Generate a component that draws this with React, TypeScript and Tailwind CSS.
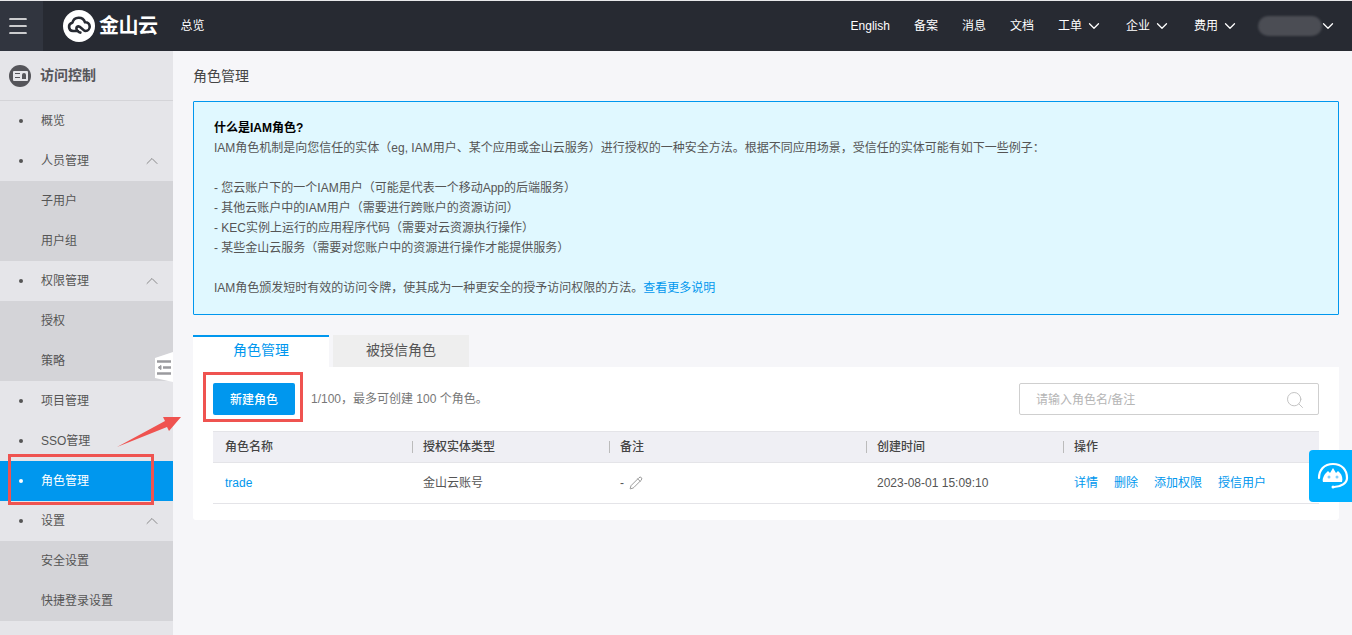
import { ChevronDown, ChevronUp, Menu, Pencil, Search } from 'lucide-react';

const navGroups = [
  { label: '概览' },
  { label: '人员管理', children: ['子用户', '用户组'] },
  { label: '权限管理', children: ['授权', '策略'] },
  { label: '项目管理' },
  { label: 'SSO管理' },
  { label: '角色管理', active: true },
  { label: '设置', children: ['安全设置', '快捷登录设置'] },
];

const topLinks = [
  { label: 'English' },
  { label: '备案' },
  { label: '消息' },
  { label: '文档' },
  { label: '工单', caret: true },
  { label: '企业', caret: true },
  { label: '费用', caret: true },
];

function Logo() {
  return (
    <div className="flex items-center ml-5">
      <div className="w-8 h-8 rounded-full bg-white flex items-center justify-center">
        <svg width="26" height="20" viewBox="0 0 26 20" fill="none" stroke="#272a32" strokeWidth="2.6" strokeLinejoin="round" strokeLinecap="round">
          <path d="M12 15H7a4.2 4.2 0 0 1-.6-8.3A6.6 6.6 0 0 1 19 6.2a4.4 4.4 0 0 1 .6 8.8c-2.6 0-4.6-4.6-7-4.6-1.4 0-2.200 1-2.200 2.200 0 1.600 2 4 4 4" />
        </svg>
      </div>
      <span className="ml-1 text-white text-[20px] leading-none font-bold tracking-[-0.5px]">金山云</span>
    </div>
  );
}

function TopBar() {
  return (
    <header className="h-[51px] shrink-0 border-t border-[#e8e8ea] bg-[#272a32] flex items-center text-white text-[12px]">
      <div className="w-[43px] h-full bg-[#31353f] flex items-center pl-[6px]">
        <Menu size={24} strokeWidth={1.7} />
      </div>
      <Logo />
      <span className="ml-[23px]">总览</span>
      <div className="ml-auto flex items-center">
        {topLinks.map((l) => (
          <div key={l.label} className={`flex items-center ${l.caret ? 'mr-[23px]' : 'mr-6'}`}>
            <span>{l.label}</span>
            {l.caret && <ChevronDown size={18} strokeWidth={1.7} className="ml-[3px]" />}
          </div>
        ))}
        <div className="ml-[-4px] w-[64px] h-[20px] rounded-full bg-[#4b4d54] blur-[1px]" />
        <ChevronDown size={18} strokeWidth={1.7} className="ml-[-3px] mr-[15px]" />
      </div>
    </header>
  );
}

function NavRow({ label, active, hasCaret }: { label: string; active?: boolean; hasCaret?: boolean }) {
  return (
    <div className={`h-10 flex items-center pl-[19px] pr-[11px] ${active ? 'bg-[#0097ee] text-white' : 'text-[#555]'}`}>
      <span className={`w-1 h-1 rounded-full ${active ? 'bg-white' : 'bg-[#555]'}`} />
      <span className="ml-[18px]">{label}</span>
      {hasCaret && <ChevronUp size={20} strokeWidth={1} className="ml-auto text-[#777]" />}
    </div>
  );
}

function Sidebar() {
  return (
    <aside className="w-[173px] shrink-0 bg-[#e5e5e9] text-[12px] relative">
      <div className="h-[50px] flex items-center pl-[9px] border-b border-[#d4d4d8]">
        <div className="w-[22px] h-[22px] rounded-full bg-[#55555a] flex items-center justify-center">
          <div className="w-[15px] h-[10px] rounded-[1px] bg-[#e5e5e9] flex items-center justify-center gap-[2px]">
            <span className="w-[5px] h-[5px] border-y border-[#55555a]" />
            <span className="w-[4px] h-[6px] bg-[#55555a] rounded-t-full" />
          </div>
        </div>
        <span className="ml-[9px] text-[14px] font-bold text-[#55555a]">访问控制</span>
      </div>
      {navGroups.map((g) => (
        <div key={g.label}>
          <NavRow label={g.label} active={g.active} hasCaret={!!g.children} />
          {g.children?.map((c) => (
            <div key={c} className="h-10 flex items-center pl-[41px] bg-[#d4d4d8] text-[#555]">{c}</div>
          ))}
        </div>
      ))}
      {/* collapse handle sticks out over the sidebar edge */}
      <div className="absolute right-0 top-[301px] w-[18px] h-[30px] bg-white flex items-center justify-center [clip-path:polygon(0_20%,100%_0,100%_100%,0_87%)]">
        <svg width="14" height="15" viewBox="0 0 14 15" stroke="#9a9a9e" strokeWidth="2.4">
          <path d="M0 1.500h14M6 7.500h8M0 13.500h14" />
          <path d="M4 5.500 1 7.500l3 2z" fill="#9a9a9e" strokeWidth="1" />
        </svg>
      </div>
    </aside>
  );
}

function Notice() {
  return (
    <div className="h-[214px] border border-[#0097ee] bg-[#e0f8ff] rounded-[1px] pt-4 px-5 text-[12px] leading-5 text-[#555] [text-spacing-trim:space-all]">
      <div className="font-bold text-black">什么是IAM角色?</div>
      <div>IAM角色机制是向您信任的实体（eg, IAM用户、某个应用或金山云服务）进行授权的一种安全方法。根据不同应用场景，受信任的实体可能有如下一些例子：</div>
      <div className="h-5" />
      <div>- 您云账户下的一个IAM用户（可能是代表一个移动App的后端服务）</div>
      <div>- 其他云账户中的IAM用户（需要进行跨账户的资源访问）</div>
      <div>- KEC实例上运行的应用程序代码（需要对云资源执行操作）</div>
      <div>- 某些金山云服务（需要对您账户中的资源进行操作才能提供服务）</div>
      <div className="h-5" />
      <div>IAM角色颁发短时有效的访问令牌，使其成为一种更安全的授予访问权限的方法。<span className="text-[#0097ee]">查看更多说明</span></div>
    </div>
  );
}

const cols = ['w-[199px]', 'w-[197px]', 'w-[257px]', 'w-[197px]', 'flex-1'];

function RoleTable() {
  const head = ['角色名称', '授权实体类型', '备注', '创建时间', '操作'];
  return (
    <div className="mx-5 mt-4 text-[12px]">
      <div className="h-[32px] flex items-center bg-[#efeff4] border-y border-[#e4e4e8] font-medium text-[#444]">
        {head.map((h, i) => (
          <div key={h} className={`${cols[i]} ${i === 0 ? 'pl-3' : 'flex items-center'}`}>
            {i > 0 && <span className="w-px h-3 bg-[#bbb] mr-[10px]" />}
            {h}
          </div>
        ))}
      </div>
      <div className="h-[41px] flex items-center border-b border-[#e4e4e8] text-[#555]">
        <div className={`${cols[0]} pl-3 text-[#0097ee]`}>trade</div>
        <div className={`${cols[1]} pl-[11px]`}>金山云账号</div>
        <div className={`${cols[2]} pl-[11px] flex items-center`}>
          -<Pencil size={14} strokeWidth={1} className="ml-[5px] text-[#555]" />
        </div>
        <div className={`${cols[3]} pl-[11px]`}>2023-08-01 15:09:10</div>
        <div className={`${cols[4]} pl-[11px] flex gap-4 text-[#0097ee]`}>
          <span>详情</span>
          <span>删除</span>
          <span>添加权限</span>
          <span>授信用户</span>
        </div>
      </div>
    </div>
  );
}

function Content() {
  return (
    <main className="flex-1 min-w-0 bg-[#f6f6f9] pl-5 pr-[13px] text-[12px]">
      <h1 className="h-[50px] flex items-center text-[14px] text-[#444]">角色管理</h1>
      <Notice />
      <div className="flex mt-5 h-8 text-[14px]">
        <div className="w-[136px] bg-white border-t-2 border-[#0097ee] text-[#0097ee] flex items-center justify-center pb-1">角色管理</div>
        <div className="w-[136px] ml-1 bg-[#eeeeee] text-[#555] flex items-center justify-center pb-[2px]">被授信角色</div>
      </div>
      <section className="h-[153px] bg-white rounded-b-[3px] pt-4">
        <div className="flex items-center h-8 pl-5 pr-5">
          <button className="w-[82px] h-8 rounded-[2px] bg-[#0097ee] text-white text-[12px] font-medium pt-px">新建角色</button>
          <span className="ml-4 text-[#777]">1/100，最多可创建 100 个角色。</span>
          <div className="ml-auto w-[300px] h-8 border border-[#cfcfcf] rounded-[2px] flex items-center pl-4 pr-[13px] pt-px text-[#b5b5b5]">
            请输入角色名/备注
            <Search size={20} strokeWidth={1.2} className="ml-auto text-[#c4c4c4]" />
          </div>
        </div>
        <RoleTable />
      </section>
    </main>
  );
}

export default function App() {
  return (
    <div className="relative w-[1352px] h-[635px] overflow-hidden flex flex-col font-['Liberation_Sans','Noto_Sans_CJK_SC',sans-serif]">
      <TopBar />
      <div className="flex flex-1 min-h-0">
        <Sidebar />
        <Content />
      </div>

      {/* red annotations drawn on top of the screenshot */}
      <div className="absolute left-[8px] top-[454px] w-[146px] h-[51px] border-[3px] border-[#ef5350]" />
      <div className="absolute left-[203px] top-[372px] w-[100px] h-[50px] border-[3px] border-[#ef5350]" />
      <svg className="absolute left-[116px] top-[414px]" width="66" height="36" viewBox="0 0 66 36">
        <path d="M1 33 49 7 47 3 65 3 53 17 51 13z" fill="#ef5350" />
      </svg>

      {/* floating support widget */}
      <div className="absolute right-0 top-[450px] w-[43px] h-[52px] bg-[#00b0ff] rounded-l-[4px]">
        <svg width="43" height="52" viewBox="0 0 43 52" fill="none">
          <path d="M10 28C10 20 15 14 24 14s14 6 14 14c0 5-6 9-13 9" stroke="white" strokeWidth="2.200" strokeLinecap="round" />
          <path d="M14 32c-1-3 1-7 3-9l2-2 2 2 3-5 3 5 2-2 2 2c2 2 3 6 2 9z" fill="white" />
          <circle cx="20" cy="27" r="1.500" fill="#7fd0ff" />
          <circle cx="28" cy="27" r="1.500" fill="#7fd0ff" />
          <circle cx="24" cy="37" r="1.500" fill="white" />
        </svg>
      </div>
    </div>
  );
}
